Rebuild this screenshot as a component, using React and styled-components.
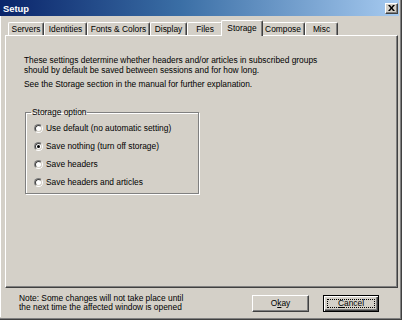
import React from 'react';
import styled, { createGlobalStyle, css } from 'styled-components';

const GlobalStyle = createGlobalStyle`
  html, body {
    margin: 0;
    padding: 0;
    background: #d4d0c8;
  }
  body {
    font-family: "Liberation Sans", Arial, sans-serif;
    font-size: 8.4px;
    color: #000;
  }
`;

const Window = styled.div`
  width: 402px;
  height: 320px;
  box-sizing: border-box;
  background: #d4d0c8;
  border-right: 1px solid #404040;
  border-bottom: 1px solid #404040;
  display: flex;
  flex-direction: column;
`;

const Frame = styled.div`
  flex: 1;
  display: flex;
  flex-direction: column;
  border-right: 1px solid #808080;
  border-bottom: 1px solid #808080;
  padding: 0 1px 1px 0;
  min-height: 0;
`;

const TitleBar = styled.div`
  height: 16px;
  flex: none;
  display: flex;
  align-items: center;
  justify-content: space-between;
  background: linear-gradient(to right, #0a246a 0%, #3a6ea5 45%, #a6caf0 100%);
  padding-left: 3px;
`;

const Title = styled.span`
  color: #fff;
  font-weight: bold;
  font-size: 9.4px;
`;

const CloseButton = styled.div`
  width: 13px;
  height: 11px;
  box-sizing: border-box;
  margin-right: 1px;
  background: #d4d0c8;
  border: 1px solid;
  border-color: #fff #404040 #404040 #fff;
  box-shadow: inset -1px -1px #808080;
  display: flex;
  align-items: center;
  justify-content: center;
`;

const Body = styled.div`
  flex: 1;
  display: flex;
  flex-direction: column;
  border-left: 1px solid #fff;
  padding: 4px 1px 0 4px;
  min-height: 0;
`;

const TabStrip = styled.div`
  display: flex;
  align-items: flex-end;
  height: 15px;
  padding-left: 3px;
  position: relative;
  z-index: 1;
`;

const Tab = styled.div`
  width: ${p => p.$w}px;
  height: 13px;
  box-sizing: border-box;
  flex: none;
  display: flex;
  align-items: center;
  justify-content: center;
  white-space: nowrap;
  background: #d4d0c8;
  border-top: 1px solid #fff;
  border-left: 1px solid #fff;
  border-right: 1px solid #404040;
  border-radius: 2px 2px 0 0;
  box-shadow: inset -1px 0 #808080;
  ${p => p.$active && css`
    height: 16px;
    margin: 0 -2px -1px;
    width: ${p.$w + 4}px;
    padding-bottom: 2px;
    position: relative;
    z-index: 2;
  `}
`;

const Panel = styled.div`
  flex: 1;
  box-sizing: border-box;
  border-top: 1px solid #fff;
  border-left: 1px solid #fff;
  border-right: 1px solid #404040;
  border-bottom: 1px solid #404040;
  box-shadow: inset -1px -1px #808080;
  padding: 19px 0 0 18px;
  min-height: 0;
`;

const Text = styled.p`
  margin: 0 0 ${p => p.$gap || 0}px;
  line-height: 10px;
  white-space: nowrap;
`;

const GroupBox = styled.fieldset`
  margin: 18px 0 0 1px;
  width: 174px;
  box-sizing: border-box;
  padding: 2px 0 2px 5px;
  border: 1px solid #808080;
  box-shadow: 1px 1px 0 #fff, inset 1px 1px 0 #fff;
`;

const Legend = styled.legend`
  padding: 0 1px;
  line-height: 10px;
`;

const RadioRow = styled.label`
  display: flex;
  align-items: center;
  height: 18px;
  padding-left: 3px;
  gap: 3px;
  white-space: nowrap;
`;

const RadioOuter = styled.span`
  width: 9px;
  height: 9px;
  box-sizing: border-box;
  border-radius: 50%;
  border: 1px solid;
  border-color: #808080 #fff #fff #808080;
  display: flex;
`;

const RadioInner = styled.span`
  flex: 1;
  border-radius: 50%;
  border: 1px solid;
  border-color: #404040 #d4d0c8 #d4d0c8 #404040;
  background: #fff;
  display: flex;
  align-items: center;
  justify-content: center;
`;

const Dot = styled.span`
  width: 3px;
  height: 3px;
  border-radius: 50%;
  background: #000;
`;

const Footer = styled.div`
  height: 28px;
  flex: none;
  display: flex;
  align-items: center;
  padding: 1px 19px 0 14px;
`;

const Note = styled.div`
  flex: 1;
  line-height: 9.5px;
  white-space: nowrap;
`;

const Button = styled.div`
  width: 57px;
  height: 17px;
  box-sizing: border-box;
  display: flex;
  align-items: center;
  justify-content: center;
  border: 1px solid;
  border-color: #fff #404040 #404040 #fff;
  box-shadow: inset -1px -1px #808080;
  ${p => p.$default && css`
    width: 56px;
    margin-left: 14px;
    border-color: #000;
    box-shadow: inset 1px 1px #fff, inset -1px -1px #404040, inset -2px -2px #808080;
    position: relative;
    &::after {
      content: '';
      position: absolute;
      inset: 3px;
      border: 1px dotted #000;
    }
  `}
`;

const options = [
  'Use default (no automatic setting)',
  'Save nothing (turn off storage)',
  'Save headers',
  'Save headers and articles',
];

const tabs = [
  ['Servers', 36],
  ['Identities', 43],
  ['Fonts & Colors', 63],
  ['Display', 37],
  ['Files', 36],
  ['Storage', 38],
  ['Compose', 44],
  ['Misc', 33],
];

const App = () => (
  <>
    <GlobalStyle />
    <Window>
      <Frame>
        <TitleBar>
          <Title>Setup</Title>
          <CloseButton>
            <svg width="7" height="6" viewBox="0 0 7 6">
              <path d="M0 0h2l1.5 2L5 0h2L4.5 3 7 6H5L3.5 4 2 6H0l2.5-3z" fill="#000" />
            </svg>
          </CloseButton>
        </TitleBar>
        <Body>
          <TabStrip>
            {tabs.map(([name, w]) => (
              <Tab key={name} $w={w} $active={name === 'Storage'}>{name}</Tab>
            ))}
          </TabStrip>
          <Panel>
            <Text>These settings determine whether headers and/or articles in subscribed groups</Text>
            <Text $gap={4}>should by default be saved between sessions and for how long.</Text>
            <Text>See the Storage section in the manual for further explanation.</Text>
            <GroupBox>
              <Legend>Storage option</Legend>
              {options.map((o, i) => (
                <RadioRow key={o}>
                  <RadioOuter>
                    <RadioInner>{i === 1 && <Dot />}</RadioInner>
                  </RadioOuter>
                  {o}
                </RadioRow>
              ))}
            </GroupBox>
          </Panel>
          <Footer>
            <Note>
              Note: Some changes will not take place until<br />
              the next time the affected window is opened
            </Note>
            <Button>O<u>k</u>ay</Button>
            <Button $default><u>C</u>ancel</Button>
          </Footer>
        </Body>
      </Frame>
    </Window>
  </>
);

export default App;
